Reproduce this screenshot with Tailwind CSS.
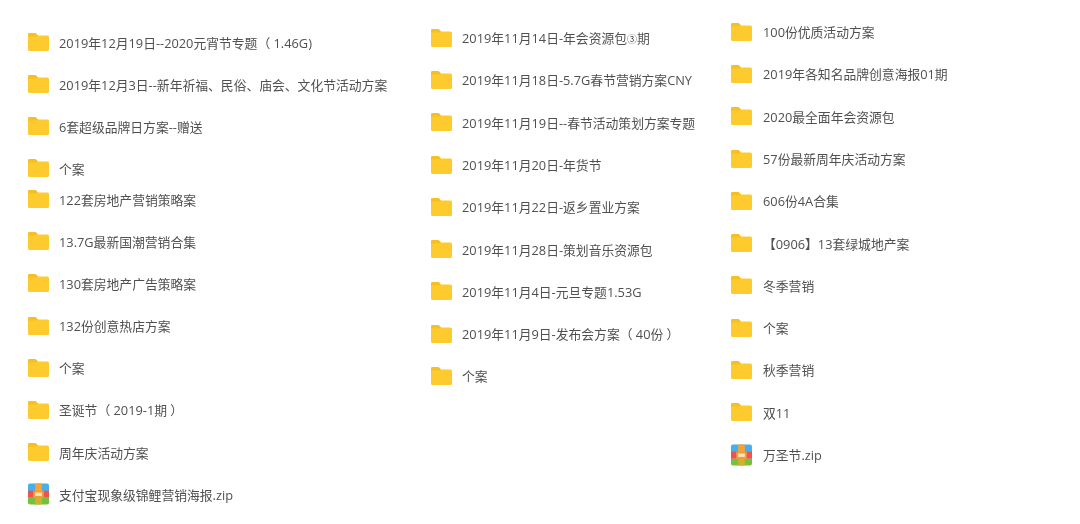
<!DOCTYPE html>
<html lang="zh-CN">
  <head>
    <meta charset="UTF-8" />
    <title>文件夹列表</title>
    <script src="https://cdn.jsdelivr.net/npm/@tailwindcss/browser@4"></script>
  </head>
  <body class="w-[1080px] h-[524px] overflow-hidden bg-white text-[12.8px] text-[#505050] font-['Open_Sans','Noto_Sans_CJK_SC',sans-serif]">
    <svg width="0" height="0" class="absolute">
      <defs>
        <symbol id="folder" viewBox="0 0 21 18">
          <path d="M1.5 0H7.5L10 2.5H19.5A1.5 1.5 0 0 1 21 4V16.5A1.5 1.5 0 0 1 19.5 18H1.5A1.5 1.5 0 0 1 0 16.5V1.5A1.5 1.5 0 0 1 1.5 0Z" fill="#fdcb2e" />
          <path d="M1.5 0H7.5L10 2.5L7.5 3.5H0V1.5A1.5 1.5 0 0 1 1.5 0Z" fill="#f6bf24" />
        </symbol>
        <symbol id="zip" viewBox="0 0 22 22">
          <path d="M2 0H20A2 2 0 0 1 22 2V8H0V2A2 2 0 0 1 2 0Z" fill="#45b0ec" />
          <rect y="7.5" width="22" height="7.5" fill="#f0524f" />
          <path d="M0 15H22V20A2 2 0 0 1 20 22H2A2 2 0 0 1 0 20Z" fill="#74c23c" />
          <rect x="7.5" width="7" height="8" fill="#f8a233" />
          <rect x="7.5" y="15" width="7" height="7" fill="#d0b02c" />
          <rect x="5.5" y="7.5" width="11" height="7.5" fill="#eb9f45" />
          <rect x="7.5" y="9.5" width="7" height="3.5" fill="#fde3ad" />
        </symbol>
      </defs>
    </svg>

    <main class="flex pl-[28px] blur-[0.5px] [&_div>span]:mt-[2px]">
      <!-- colonne 1 -->
      <section class="w-[403px] pt-[22px]">
        <div class="flex items-center h-[42px]"><svg class="w-[21px] h-[18px] mr-[10px] mb-[2px]"><use href="#folder" /></svg><span>2019年12月19日--2020元宵节专题（ 1.46G)</span></div>
        <div class="flex items-center h-[42px]"><svg class="w-[21px] h-[18px] mr-[10px] mb-[2px]"><use href="#folder" /></svg><span>2019年12月3日--新年祈福、民俗、庙会、文化节活动方案</span></div>
        <div class="flex items-center h-[42px]"><svg class="w-[21px] h-[18px] mr-[10px] mb-[2px]"><use href="#folder" /></svg><span>6套超级品牌日方案--赠送</span></div>
        <div class="flex items-center h-[42px]"><svg class="w-[21px] h-[18px] mr-[10px] mb-[2px]"><use href="#folder" /></svg><span>个案</span></div>
        <div class="-mt-[12px]">
          <div class="flex items-center h-[42.2px]"><svg class="w-[21px] h-[18px] mr-[10px]"><use href="#folder" /></svg><span>122套房地产营销策略案</span></div>
          <div class="flex items-center h-[42.2px]"><svg class="w-[21px] h-[18px] mr-[10px]"><use href="#folder" /></svg><span>13.7G最新国潮营销合集</span></div>
          <div class="flex items-center h-[42.2px]"><svg class="w-[21px] h-[18px] mr-[10px]"><use href="#folder" /></svg><span>130套房地产广告策略案</span></div>
          <div class="flex items-center h-[42.2px]"><svg class="w-[21px] h-[18px] mr-[10px]"><use href="#folder" /></svg><span>132份创意热店方案</span></div>
          <div class="flex items-center h-[42.2px]"><svg class="w-[21px] h-[18px] mr-[10px]"><use href="#folder" /></svg><span>个案</span></div>
          <div class="flex items-center h-[42.2px]"><svg class="w-[21px] h-[18px] mr-[10px]"><use href="#folder" /></svg><span>圣诞节（ 2019-1期 ）</span></div>
          <div class="flex items-center h-[42.2px]"><svg class="w-[21px] h-[18px] mr-[10px]"><use href="#folder" /></svg><span>周年庆活动方案</span></div>
          <div class="flex items-center h-[42.2px]"><svg class="w-[21px] h-[22px] mr-[10px]"><use href="#zip" /></svg><span>支付宝现象级锦鲤营销海报.zip</span></div>
        </div>
      </section>

      <!-- colonne 2 -->
      <section class="w-[300px] pt-[16.5px]">
        <div class="flex items-center h-[42.3px]"><svg class="w-[21px] h-[18px] mr-[10px]"><use href="#folder" /></svg><span>2019年11月14日-年会资源包<span class="text-[10px]">③</span>期</span></div>
        <div class="flex items-center h-[42.3px]"><svg class="w-[21px] h-[18px] mr-[10px]"><use href="#folder" /></svg><span>2019年11月18日-5.7G春节营销方案CNY</span></div>
        <div class="flex items-center h-[42.3px]"><svg class="w-[21px] h-[18px] mr-[10px]"><use href="#folder" /></svg><span>2019年11月19日--春节活动策划方案专题</span></div>
        <div class="flex items-center h-[42.3px]"><svg class="w-[21px] h-[18px] mr-[10px]"><use href="#folder" /></svg><span>2019年11月20日-年货节</span></div>
        <div class="flex items-center h-[42.3px]"><svg class="w-[21px] h-[18px] mr-[10px]"><use href="#folder" /></svg><span>2019年11月22日-返乡置业方案</span></div>
        <div class="flex items-center h-[42.3px]"><svg class="w-[21px] h-[18px] mr-[10px]"><use href="#folder" /></svg><span>2019年11月28日-策划音乐资源包</span></div>
        <div class="flex items-center h-[42.3px]"><svg class="w-[21px] h-[18px] mr-[10px]"><use href="#folder" /></svg><span>2019年11月4日-元旦专题1.53G</span></div>
        <div class="flex items-center h-[42.3px]"><svg class="w-[21px] h-[18px] mr-[10px]"><use href="#folder" /></svg><span>2019年11月9日-发布会方案（ 40份 ）</span></div>
        <div class="flex items-center h-[42.3px]"><svg class="w-[21px] h-[18px] mr-[10px]"><use href="#folder" /></svg><span>个案</span></div>
      </section>

      <!-- colonne 3 -->
      <section class="flex-1 pt-[10.5px]">
        <div class="flex items-center h-[42.3px]"><svg class="w-[21px] h-[18px] mr-[11px]"><use href="#folder" /></svg><span>100份优质活动方案</span></div>
        <div class="flex items-center h-[42.3px]"><svg class="w-[21px] h-[18px] mr-[11px]"><use href="#folder" /></svg><span>2019年各知名品牌创意海报01期</span></div>
        <div class="flex items-center h-[42.3px]"><svg class="w-[21px] h-[18px] mr-[11px]"><use href="#folder" /></svg><span>2020最全面年会资源包</span></div>
        <div class="flex items-center h-[42.3px]"><svg class="w-[21px] h-[18px] mr-[11px]"><use href="#folder" /></svg><span>57份最新周年庆活动方案</span></div>
        <div class="flex items-center h-[42.3px]"><svg class="w-[21px] h-[18px] mr-[11px]"><use href="#folder" /></svg><span>606份4A合集</span></div>
        <div class="flex items-center h-[42.3px]"><svg class="w-[21px] h-[18px] mr-[11px]"><use href="#folder" /></svg><span>【0906】13套绿城地产案</span></div>
        <div class="flex items-center h-[42.3px]"><svg class="w-[21px] h-[18px] mr-[11px]"><use href="#folder" /></svg><span>冬季营销</span></div>
        <div class="flex items-center h-[42.3px]"><svg class="w-[21px] h-[18px] mr-[11px]"><use href="#folder" /></svg><span>个案</span></div>
        <div class="flex items-center h-[42.3px]"><svg class="w-[21px] h-[18px] mr-[11px]"><use href="#folder" /></svg><span>秋季营销</span></div>
        <div class="flex items-center h-[42.3px]"><svg class="w-[21px] h-[18px] mr-[11px]"><use href="#folder" /></svg><span>双11</span></div>
        <div class="flex items-center h-[42.3px]"><svg class="w-[21px] h-[22px] mr-[11px]"><use href="#zip" /></svg><span>万圣节.zip</span></div>
      </section>
    </main>
  </body>
</html>
